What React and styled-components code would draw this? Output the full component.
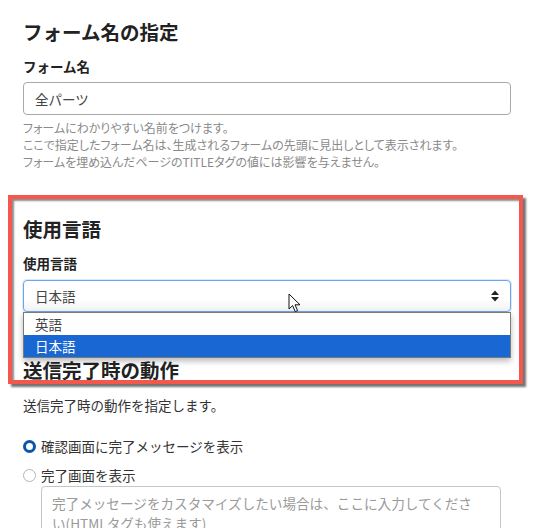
import React from "react";
import styled, { createGlobalStyle } from "styled-components";

const Global = createGlobalStyle`
  html, body { margin: 0; padding: 0; background: #fff; }
  body {
    font-family: "Noto Sans CJK JP", "Noto Sans", sans-serif;
    color: #333;
    -webkit-font-smoothing: antialiased;
  }
  * { box-sizing: border-box; }
`;

const Page = styled.div`
  width: 534px;
  height: 528px;
  overflow: hidden;
  padding: 20px 23px 0 23px;
`;

const Heading = styled.h2`
  margin: 0;
  font-size: 19.5px;
  font-weight: 700;
  line-height: ${(p) => (p.$tight ? "20px" : "24px")};
  color: #222;
`;

const Label = styled.div`
  margin-top: 12px;
  font-size: 13.5px;
  font-weight: 700;
  line-height: 20px;
  color: #222;
`;

const TextInput = styled.div`
  margin-top: 6px;
  height: 33px;
  border: 1px solid #a9a9a9;
  border-radius: 4px;
  padding: 0 11px;
  display: flex;
  align-items: center;
  font-size: 13.5px;
  color: #444;
`;

const Help = styled.div`
  margin-top: 4px;
  font-size: 12px;
  line-height: 17px;
  color: #8a8a8a;
  font-feature-settings: "palt";
`;

const Highlight = styled.section`
  margin: 25px -12px 0 -15px;
  border: 4px solid #f4574b;
  padding: 18px 8px 0 11px;
  box-shadow: 3px 3px 2px rgba(0, 0, 0, 0.55), inset 2px 2px 2px rgba(0, 0, 0, 0.45);
`;

const SelectWrap = styled.div`
  position: relative;
  margin-top: 7px;
`;

const SelectBox = styled.div`
  height: 32px;
  border: 1px solid #6aa6ee;
  border-radius: 4px;
  box-shadow: 0 0 0 1px rgba(106, 166, 238, 0.25);
  background: linear-gradient(#fff 60%, #f2f2f2);
  padding: 0 10px 0 11px;
  display: flex;
  align-items: center;
  justify-content: space-between;
  font-size: 13.5px;
  color: #444;
`;

const Dropdown = styled.ul`
  position: absolute;
  left: 0;
  right: 0;
  top: 100%;
  margin: 0;
  padding: 0;
  list-style: none;
  background: #fff;
  border: 1px solid #7a7a7a;
  box-shadow: 0 3px 6px rgba(0, 0, 0, 0.28);
  z-index: 2;
`;

const Option = styled.li`
  height: 22px;
  padding: 0 11px;
  display: flex;
  align-items: center;
  font-size: 13.5px;
  background: ${(p) => (p.$selected ? "#1967d2" : "#fff")};
  color: ${(p) => (p.$selected ? "#fff" : "#444")};
`;

const Cursor = styled.svg`
  position: absolute;
  left: 265px;
  top: 13px;
  z-index: 3;
`;

const SectionGap = styled.div`
  height: 48px;
`;

const Desc = styled.div`
  margin-top: 11px;
  font-size: 13.5px;
  line-height: 20px;
  color: #333;
`;

const RadioList = styled.div`
  margin-top: 20px;
  display: flex;
  flex-direction: column;
  gap: 7px;
`;

const RadioRow = styled.label`
  display: flex;
  align-items: center;
  gap: 5px;
  height: 22px;
  font-size: 13.5px;
  color: #333;
`;

const RadioDot = styled.span`
  width: 13px;
  height: 13px;
  border-radius: 50%;
  flex: none;
  border: ${(p) => (p.$checked ? "3.5px solid #0b55a8" : "1px solid #b5b5b5")};
  background: #fff;
`;

const TextArea = styled.textarea`
  display: block;
  margin: 0 0 0 18px;
  width: 460px;
  height: 70px;
  border: 1px solid #c6c6c6;
  border-radius: 4px;
  padding: 6px 18px 0 10px;
  font-family: "Noto Sans CJK JP", "Noto Sans", sans-serif;
  font-size: 13.6px;
  line-height: 20px;
  resize: none;
  outline: none;
  &::placeholder { color: #9a9a9a; }
`;

const Arrows = () => (
  <svg width="10" height="12" viewBox="0 0 10 12">
    <path d="M5 0.5 L9 5 H1 Z" fill="#222" />
    <path d="M5 11.5 L9 7 H1 Z" fill="#222" />
  </svg>
);

export default function App() {
  return (
    <>
      <Global />
      <Page>
        <Heading>フォーム名の指定</Heading>
        <Label>フォーム名</Label>
        <TextInput>全パーツ</TextInput>
        <Help>
          フォームにわかりやすい名前をつけます。
          <br />
          ここで指定したフォーム名は、生成されるフォームの先頭に見出しとして表示されます。
          <br />
          フォームを埋め込んだページのTITLEタグの値には影響を与えません。
        </Help>

        <Highlight>
          <Heading>使用言語</Heading>
          <Label>使用言語</Label>
          <SelectWrap>
            <SelectBox>
              <span>日本語</span>
              <Arrows />
            </SelectBox>
            <Dropdown>
              <Option>英語</Option>
              <Option $selected>日本語</Option>
            </Dropdown>
            <Cursor width="14" height="21" viewBox="0 0 14 21">
              <path
                d="M1 1 L1 16 L4.6 12.6 L7.2 18.6 L9.6 17.6 L7 11.8 L12 11.8 Z"
                fill="#fff"
                stroke="#111"
                strokeWidth="1"
                strokeLinejoin="round"
              />
            </Cursor>
          </SelectWrap>
          <SectionGap />
          <Heading $tight>送信完了時の動作</Heading>
        </Highlight>

        <Desc>送信完了時の動作を指定します。</Desc>
        <RadioList>
          <RadioRow>
            <RadioDot $checked />
            確認画面に完了メッセージを表示
          </RadioRow>
          <RadioRow>
            <RadioDot />
            完了画面を表示
          </RadioRow>
        </RadioList>
        <TextArea placeholder="完了メッセージをカスタマイズしたい場合は、ここに入力してください(HTMLタグも使えます)" />
      </Page>
    </>
  );
}
